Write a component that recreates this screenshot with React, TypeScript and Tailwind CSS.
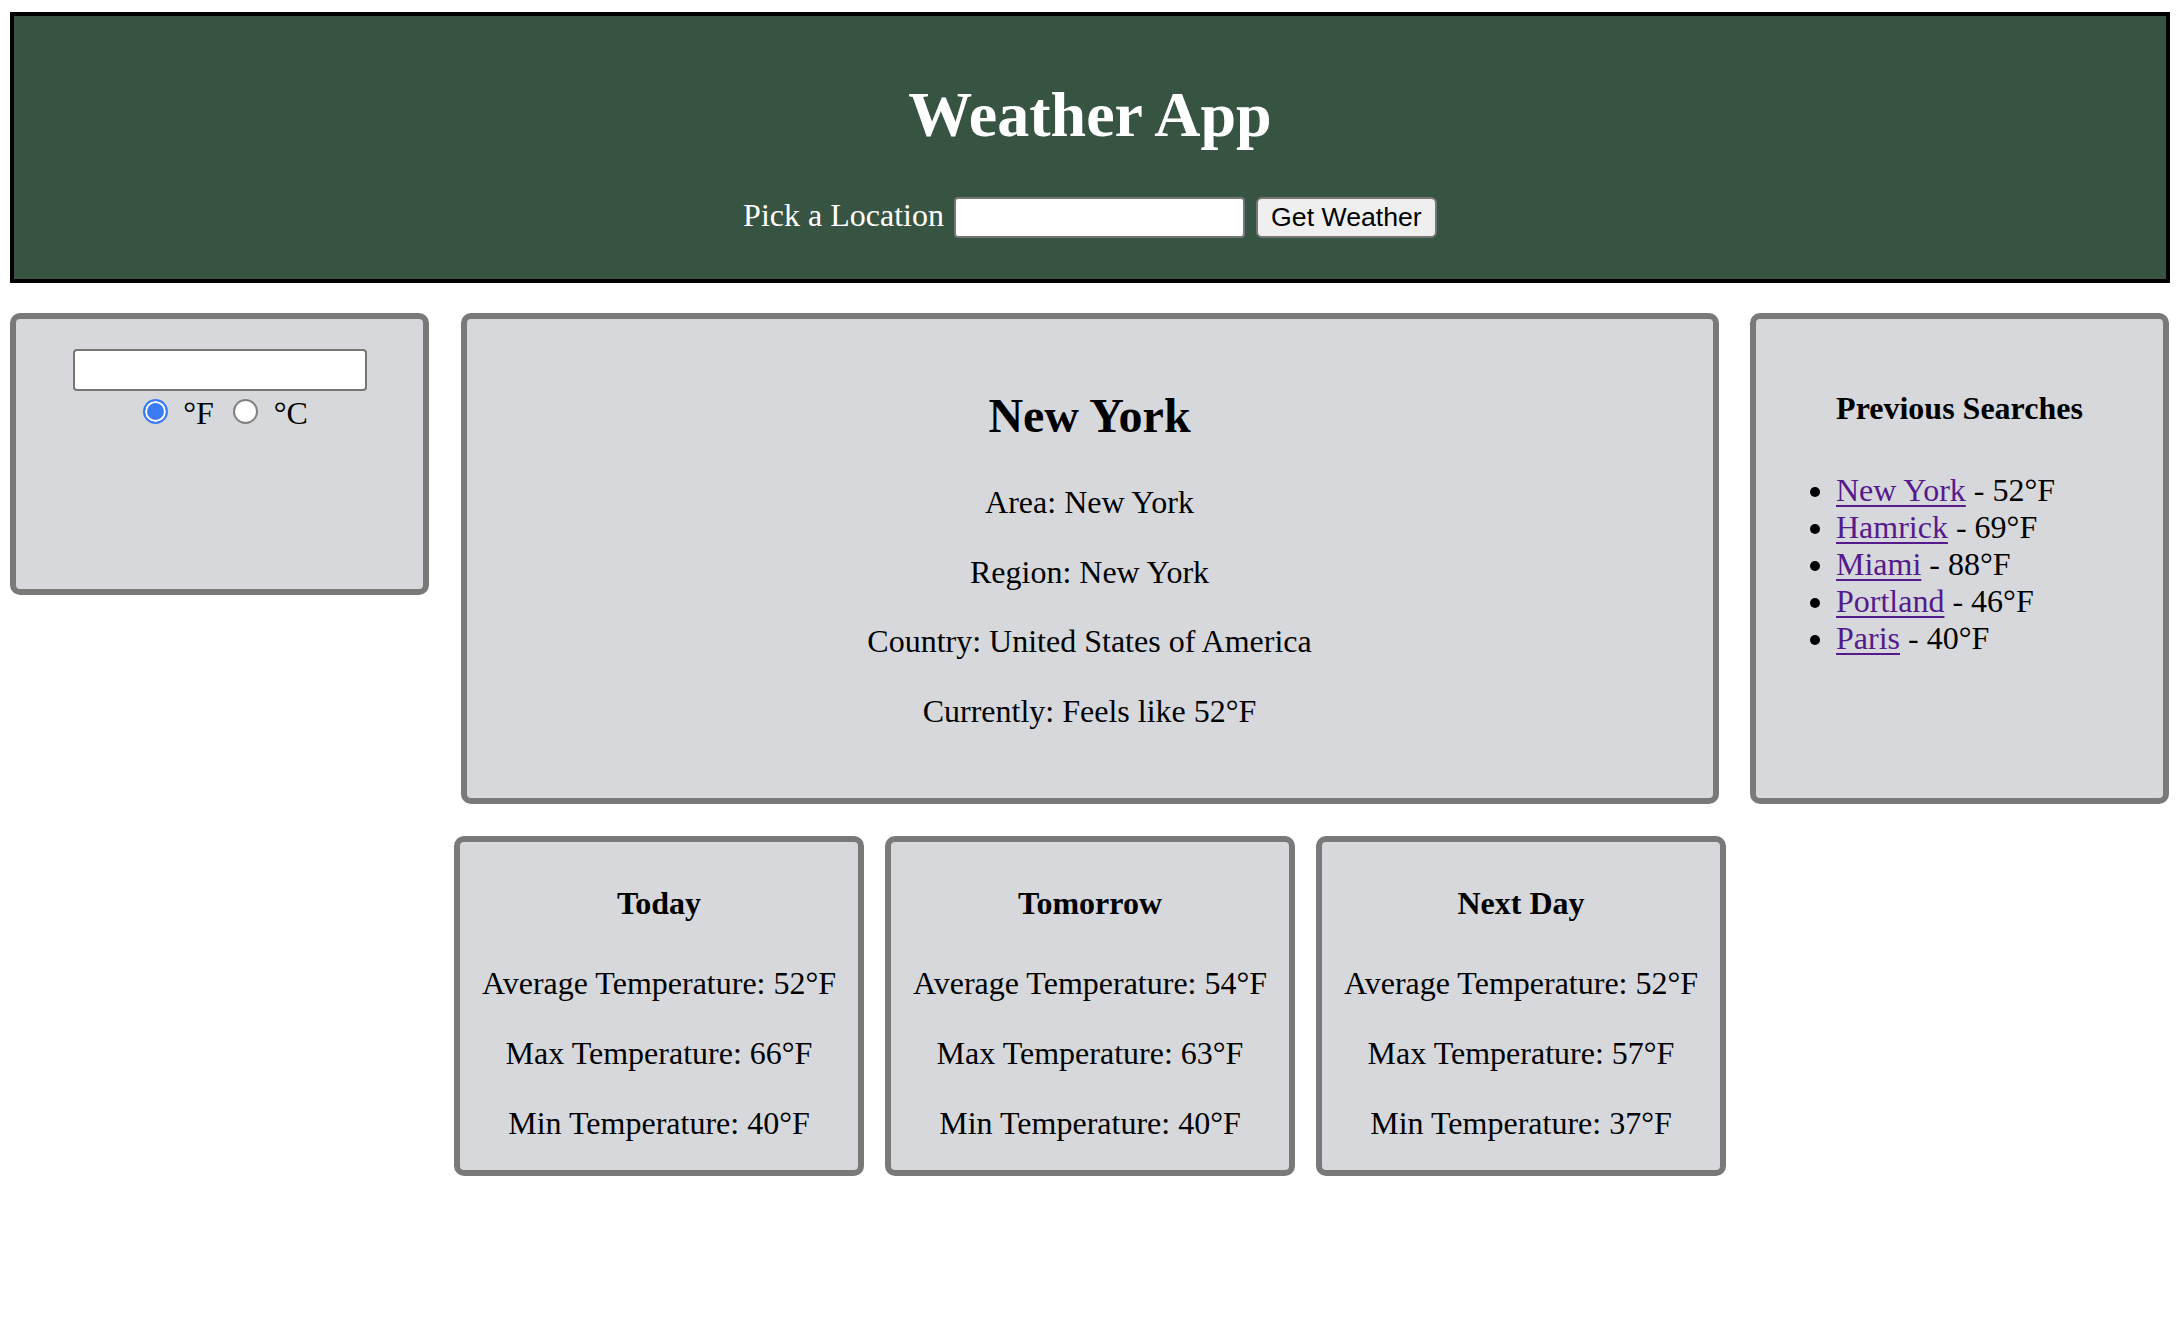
import React, { useState } from 'react';

const PREVIOUS = [
  { city: 'New York', temp: 52 },
  { city: 'Hamrick', temp: 69 },
  { city: 'Miami', temp: 88 },
  { city: 'Portland', temp: 46 },
  { city: 'Paris', temp: 40 },
];

const FORECAST = [
  { label: 'Today', avg: 52, max: 66, min: 40 },
  { label: 'Tomorrow', avg: 54, max: 63, min: 40 },
  { label: 'Next Day', avg: 52, max: 57, min: 37 },
];

const panel = 'box-border border-[6px] border-[#797979] rounded-[10px] bg-[#d6d8dc]';

const Radio = ({ checked, onClick }: { checked: boolean; onClick: () => void }) => (
  <input
    type="radio"
    checked={checked}
    onChange={onClick}
    className={
      checked
        ? 'appearance-none w-[25px] h-[25px] rounded-full border-2 border-[#3b7cf5] bg-[#3b7cf5] shadow-[inset_0_0_0_2px_white] mb-[5px]'
        : 'appearance-none w-[25px] h-[25px] rounded-full border-2 border-[#808080] bg-white mb-[5px]'
    }
  />
);

const App = () => {
  const [unit, setUnit] = useState<'F' | 'C'>('F');

  return (
    <div className="min-h-screen bg-white font-['Liberation_Serif',serif] text-black">
      <div className="ml-[10px] w-[2160px] pt-[12px]">
        <header className="border-4 border-black bg-[#375442] pt-[62px] pb-[41px]">
          <h1 className="text-center text-[64px] font-bold leading-[74px] text-white">Weather App</h1>
          <div className="mt-[45px] flex h-[41px] items-center justify-center">
            <label className="mr-[10px] pb-[4px] text-[32px] leading-[37px] text-white">Pick a Location</label>
            <input className="box-border h-[41px] w-[291px] rounded-[4px] border-2 border-[#767676] bg-white px-2 text-[26px]" />
            <button className="ml-[11px] box-border h-[41px] w-[181px] rounded-[6px] border-2 border-[#767676] bg-[#efefef] font-['Liberation_Sans',sans-serif] text-[26.67px] leading-none text-black">
              Get Weather
            </button>
          </div>
        </header>

        <div className="mt-[30px] flex items-start gap-[31.5px]">
          <div className={`${panel} flex h-[282px] w-[419px] flex-col items-center pt-[30px]`}>
            <input className="box-border h-[42px] w-[294px] rounded-[4px] border-2 border-[#767676] bg-white px-2 text-[26px]" />
            <div className="mt-[4px] flex h-[37px] items-center pl-[12px] text-[32px] leading-[37px]">
              <Radio checked={unit === 'F'} onClick={() => setUnit('F')} />
              <span className="ml-[15px]">°F</span>
              <span className="ml-[19px] flex items-center">
                <Radio checked={unit === 'C'} onClick={() => setUnit('C')} />
              </span>
              <span className="ml-[16px]">°C</span>
            </div>
          </div>

          <div className={`${panel} h-[491px] w-[1258px] pt-[69px] text-center`}>
            <h2 className="text-[48px] font-bold leading-[55px]">New York</h2>
            <div className="mt-[41px] flex flex-col gap-[32.5px] text-[32px] leading-[37px]">
              <p>Area: New York</p>
              <p>Region: New York</p>
              <p>Country: United States of America</p>
              <p>Currently: Feels like 52°F</p>
            </div>
          </div>

          <div className={`${panel} h-[491px] w-[419px] pt-[71px]`}>
            <h4 className="text-center text-[32px] font-bold leading-[37px]">Previous Searches</h4>
            <ul className="mt-[45px] list-disc pl-[80px] text-[32px] leading-[37px]">
              {PREVIOUS.map((p) => (
                <li key={p.city}>
                  <a href="#" className="text-[#551a8b] underline decoration-[2px] underline-offset-[4px]">
                    {p.city}
                  </a>{' '}
                  - {p.temp}°F
                </li>
              ))}
            </ul>
          </div>
        </div>

        <div className="mt-[32px] flex justify-center gap-[21px]">
          {FORECAST.map((d) => (
            <div key={d.label} className={`${panel} h-[340px] w-[410px] pt-[43px] text-center text-[32px] leading-[37px]`}>
              <h4 className="font-bold">{d.label}</h4>
              <div className="mt-[43px] flex flex-col gap-[33px]">
                <p>Average Temperature: {d.avg}°F</p>
                <p>Max Temperature: {d.max}°F</p>
                <p>Min Temperature: {d.min}°F</p>
              </div>
            </div>
          ))}
        </div>
      </div>
    </div>
  );
};

export default App;
